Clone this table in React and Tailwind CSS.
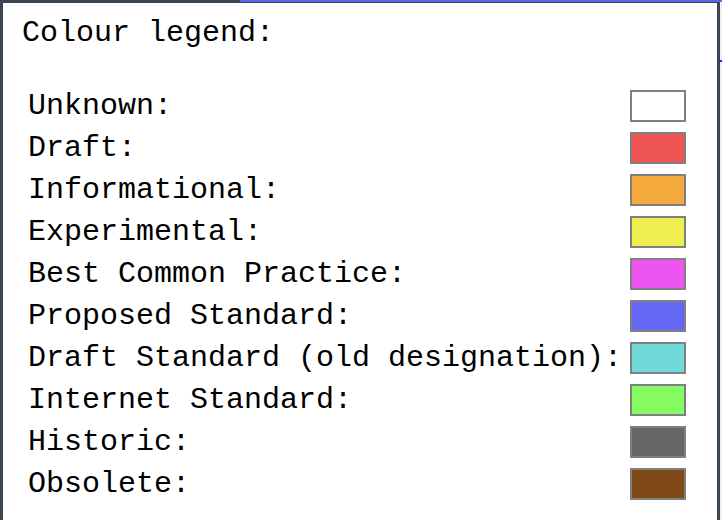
const ROWS = [
  { label: "Unknown:", color: "bg-white" },
  { label: "Draft:", color: "bg-[#ef5552]" },
  { label: "Informational:", color: "bg-[#f4aa3c]" },
  { label: "Experimental:", color: "bg-[#f0ef50]" },
  { label: "Best Common Practice:", color: "bg-[#ee55f0]" },
  { label: "Proposed Standard:", color: "bg-[#6468f4]" },
  { label: "Draft Standard (old designation):", color: "bg-[#70dadb]" },
  { label: "Internet Standard:", color: "bg-[#86fc62]" },
  { label: "Historic:", color: "bg-[#666666]" },
  { label: "Obsolete:", color: "bg-[#7f4a17]" },
];

export default function App() {
  return (
    <div className="relative h-[520px] w-[722px] overflow-hidden bg-[#f0f0f0]">
      {/* strip of the page behind the popup */}
      <div className="absolute left-[240px] right-0 top-0 z-10 h-[2px] bg-[#5c63e8]" />
      <div className="absolute right-0 top-[60px] h-[2px] w-[3px] bg-[#1d2be0]" />

      <div
        className="h-[530px] w-[720px] border-[3px] border-b-0 border-[#3b4552] bg-white pl-[19px] pt-[9px] text-black"
        style={{ fontFamily: '"Liberation Mono", "Courier New", monospace' }}
      >
        <p className="whitespace-pre text-[30px] leading-[42px]">Colour legend:</p>

        <div className="ml-[6px] mt-[31px] flex flex-col">
          {ROWS.map((r) => (
            <div key={r.label} className="flex h-[42px] items-start">
              <span className="w-[602px] whitespace-pre text-[30px] leading-[42px]">{r.label}</span>
              <span className={`mt-[5px] h-[32px] w-[56px] border-2 border-[#808080] ${r.color}`} />
            </div>
          ))}
        </div>
      </div>
    </div>
  );
}
